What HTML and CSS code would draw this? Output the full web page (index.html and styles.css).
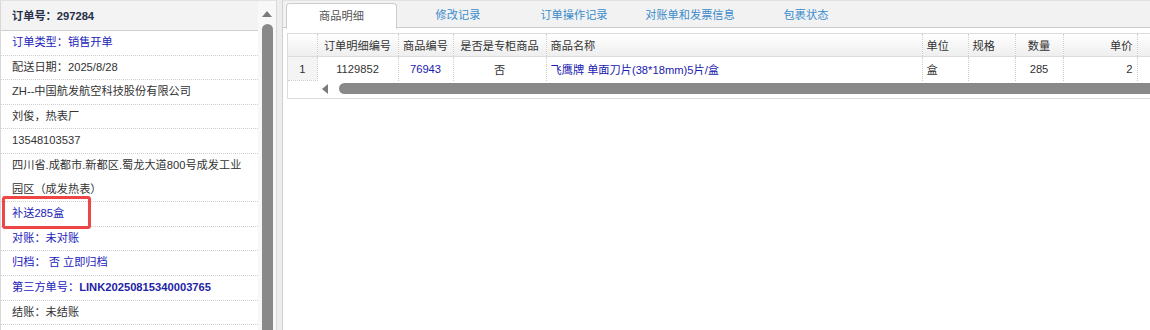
FILE: index.html
```html
<!DOCTYPE html>
<html lang="zh-CN">
<head>
    <meta charset="UTF-8">
    <title>订单详情</title>
    <link rel="stylesheet" href="styles.css">
</head>
<body>
    <div class="layout">
        <aside class="order-panel">
            <div class="order-info">
                <div class="order-title">订单号：297284</div>
                <div class="info-row blue">订单类型：销售开单</div>
                <div class="info-row">配送日期：2025/8/28</div>
                <div class="info-row">ZH--中国航发航空科技股份有限公司</div>
                <div class="info-row">刘俊，热表厂</div>
                <div class="info-row">13548103537</div>
                <div class="info-row">四川省.成都市.新都区.蜀龙大道800号成发工业园区（成发热表）</div>
                <div class="info-row blue">补送285盒</div>
                <div class="info-row blue">对账：未对账</div>
                <div class="info-row blue">归档：&nbsp;否 立即归档</div>
                <div class="info-row blue">第三方单号：<b>LINK20250815340003765</b></div>
                <div class="info-row">结账：未结账</div>
                <div class="info-buttons">
                    <button class="btn btn-small"></button>
                    <button class="btn btn-wide"></button>
                </div>
            </div>
            <div class="vscroll">
                <span class="arrow-up"></span>
                <div class="vthumb"></div>
            </div>
            <!-- highlight mark from the screenshot -->
            <div class="mark"></div>
        </aside>

        <div class="splitter"></div>

        <main class="detail-panel">
            <nav class="tabs">
                <a class="tab active">商品明细</a>
                <a class="tab">修改记录</a>
                <a class="tab">订单操作记录</a>
                <a class="tab">对账单和发票信息</a>
                <a class="tab">包裹状态</a>
            </nav>

            <div class="grid">
                <table class="grid-table">
                    <colgroup>
                        <col style="width:29px">
                        <col style="width:81px">
                        <col style="width:55px">
                        <col style="width:93px">
                        <col style="width:376px">
                        <col style="width:46px">
                        <col style="width:47px">
                        <col style="width:48px">
                        <col style="width:74px">
                        <col style="width:60px">
                    </colgroup>
                    <thead>
                        <tr>
                            <th class="rownum"></th>
                            <th>订单明细编号</th>
                            <th>商品编号</th>
                            <th>是否是专柜商品</th>
                            <th class="left">商品名称</th>
                            <th class="left">单位</th>
                            <th class="left">规格</th>
                            <th>数量</th>
                            <th class="right">单价</th>
                            <th></th>
                        </tr>
                    </thead>
                    <tbody>
                        <tr>
                            <td class="rownum">1</td>
                            <td>1129852</td>
                            <td class="link">76943</td>
                            <td>否</td>
                            <td class="left link">飞鹰牌 单面刀片(38*18mm)5片/盒</td>
                            <td class="left">盒</td>
                            <td></td>
                            <td>285</td>
                            <td class="right">2</td>
                            <td></td>
                        </tr>
                    </tbody>
                </table>
                <div class="hscroll">
                    <span class="arrow-left"></span>
                    <div class="hthumb"></div>
                </div>
            </div>
        </main>
    </div>
</body>
</html>
```

FILE: styles.css
```css
body {
    margin: 0;
    padding: 0;
    font-family: "Liberation Sans", "Noto Sans CJK SC", sans-serif;
    font-size: 11.2px;
    color: #333;
    background: #fff;
    overflow: hidden;
}

.layout {
    display: flex;
    height: 330px;
}

/* left order panel */
.order-panel {
    position: relative;
    display: flex;
    width: 277px;
    flex-shrink: 0;
    border-top: 1px solid #e2e2e2;
    box-sizing: border-box;
}

.order-info {
    width: 258px;
    border-left: 1px solid #d8d8d8;
    box-sizing: border-box;
}

.order-title {
    height: 29px;
    line-height: 30px;
    padding-left: 11px;
    background: #f3f3f3;
    border-bottom: 1px solid #cfcfcf;
    font-weight: bold;
    color: #263048;
}

.info-row {
    line-height: 23.6px;
    padding-left: 11px;
    padding-right: 8px;
    border-bottom: 1px dotted #cfcfcf;
    color: #333;
}

.info-row.blue {
    color: #2222bb;
}

.info-row b {
    color: #1f1fa8;
}

.info-buttons {
    display: flex;
    gap: 3px;
    padding: 6px 0 0 46px;
}

.btn {
    height: 24px;
    border: 1px solid #b9c3ce;
    border-radius: 3px;
    background: linear-gradient(#ffffff, #eef1f4);
}

.btn-small {
    width: 66px;
}

.btn-wide {
    width: 99px;
}

.vscroll {
    position: relative;
    width: 18px;
    background: #f8f8f8;
    border-right: 1px solid #d9d9d9;
}

.arrow-up {
    position: absolute;
    top: 10px;
    left: 4px;
    border-left: 5px solid transparent;
    border-right: 5px solid transparent;
    border-bottom: 6px solid #7a7a7a;
}

.vthumb {
    position: absolute;
    top: 23px;
    left: 4px;
    width: 11px;
    height: 320px;
    background: #898989;
    border-radius: 6px 6px 0 0;
}

.mark {
    position: absolute;
    left: 2px;
    top: 195px;
    width: 89px;
    height: 33px;
    border: 3px solid #ee4646;
    border-radius: 3px;
    box-sizing: border-box;
}

.splitter {
    width: 5px;
    flex-shrink: 0;
    background: #ededed;
}

/* right detail panel */
.detail-panel {
    flex: 1;
    min-width: 0;
    overflow: hidden;
    border-left: 1px solid #d0d0d0;
    border-top: 1px solid #e2e2e2;
}

.tabs {
    display: flex;
    gap: 6px;
    height: 26px;
    padding-left: 3px;
    background: #f2f2f2;
    border-bottom: 1px solid #cdcdcd;
}

.tab {
    width: 110px;
    margin-top: 2px;
    line-height: 24px;
    text-align: center;
    color: #3a8ccc;
    cursor: pointer;
}

.tab.active {
    width: 109px;
    height: 25px;
    background: #fff;
    color: #555;
    border: 1px solid #cdcdcd;
    border-bottom: none;
    border-radius: 4px 4px 0 0;
}

.grid {
    width: 909px;
    margin: 5px 0 0 4px;
    border: 1px solid #dcdcdc;
    border-right: none;
}

.grid-table {
    border-collapse: collapse;
    table-layout: fixed;
    width: 909px;
}

.grid-table th,
.grid-table td {
    padding: 0 4px;
    text-align: center;
    white-space: nowrap;
    overflow: hidden;
    border-right: 1px dotted #cdcdcd;
}

.grid-table th {
    height: 22px;
    font-weight: normal;
    color: #333;
    background: linear-gradient(#ffffff, #eeeeee);
    border-bottom: 1px solid #dcdcdc;
}

.grid-table td {
    height: 23px;
    color: #333;
}

.grid-table .left {
    text-align: left;
}

.grid-table .right {
    text-align: right;
}

.grid-table td.link {
    color: #2020b0;
}

.grid-table td.rownum {
    background: #f4f4f4;
    border-bottom: 1px dotted #cdcdcd;
}

.hscroll {
    position: relative;
    height: 17px;
}

.arrow-left {
    position: absolute;
    left: 34px;
    top: 3px;
    border-top: 5px solid transparent;
    border-bottom: 5px solid transparent;
    border-right: 6px solid #7a7a7a;
}

.hthumb {
    position: absolute;
    left: 51px;
    top: 2px;
    right: 0;
    height: 11px;
    background: #898989;
    border-radius: 6px 0 0 6px;
}
```
